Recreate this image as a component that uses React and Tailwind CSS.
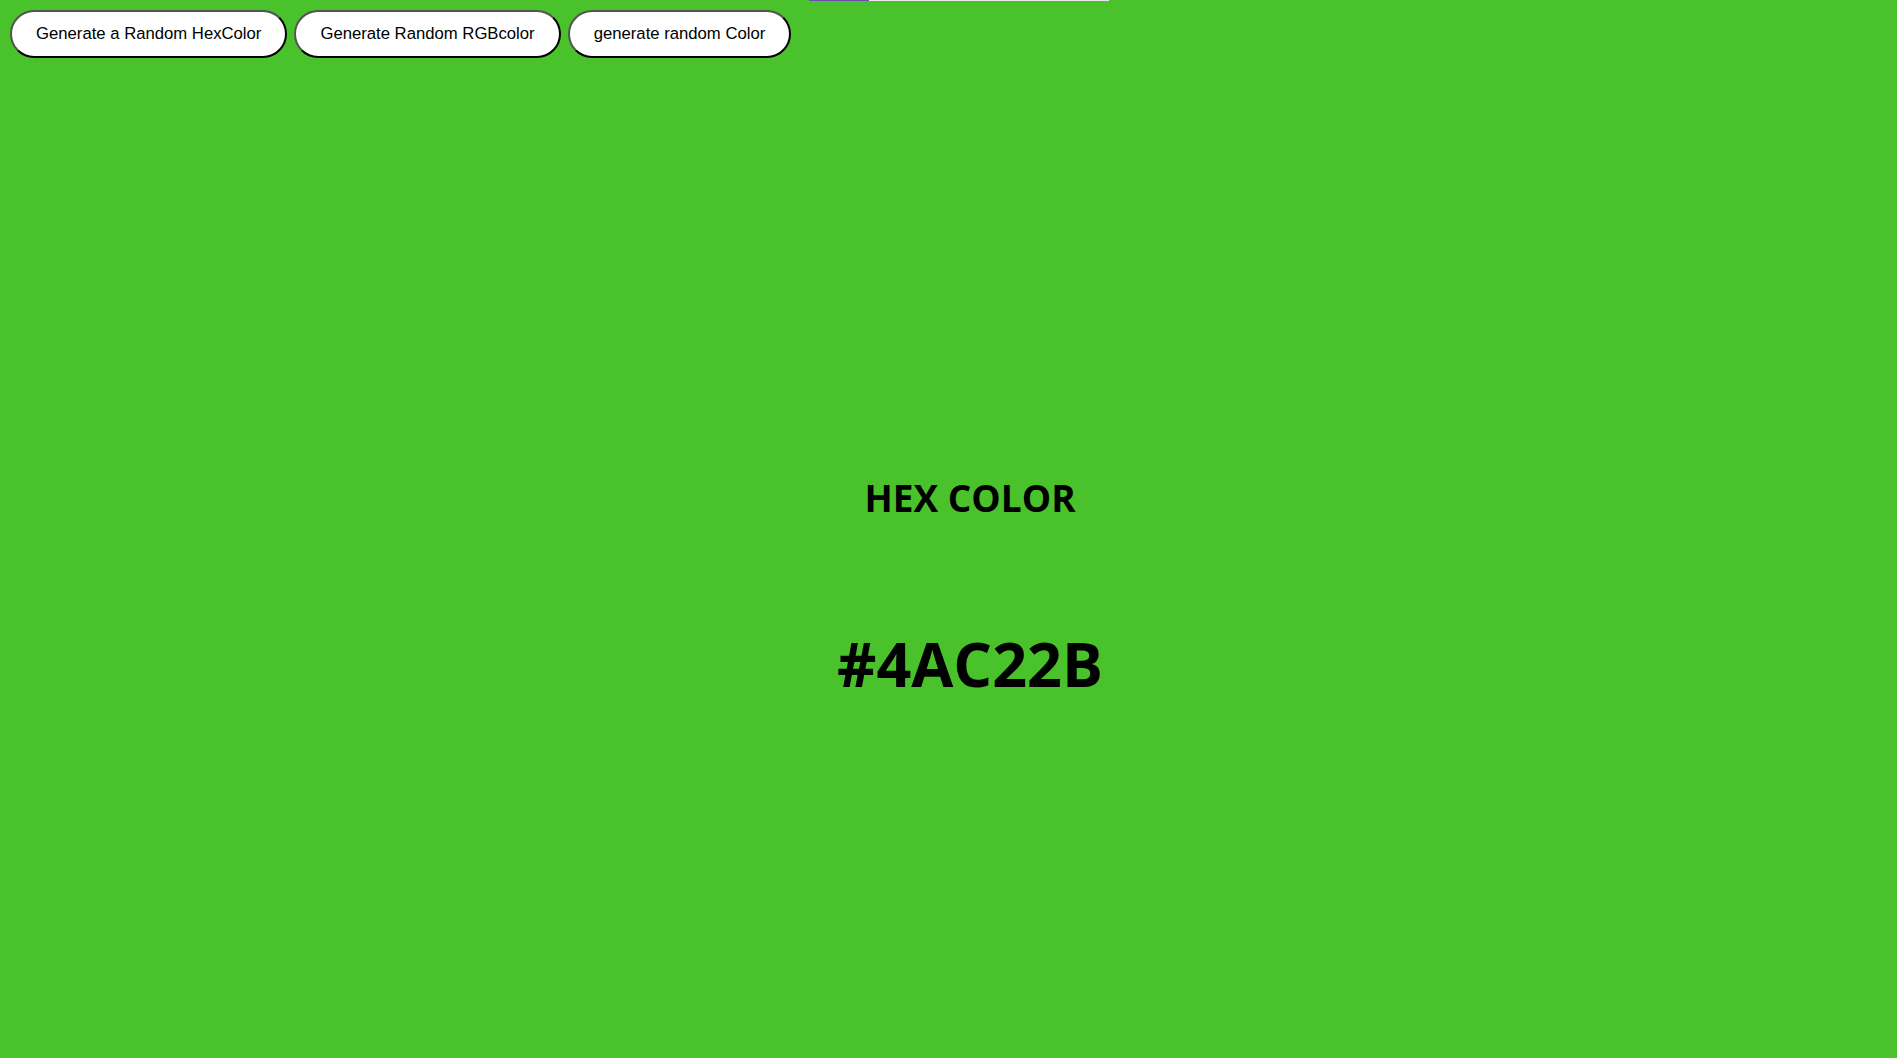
import { useState } from "react";

const buttons = ["Generate a Random HexColor", "Generate Random RGBcolor", "generate random Color"];

const App = () => {
    const [color] = useState("#4AC22B");

    return (
        <div className="relative min-h-[1058px] bg-[#4ac22b] font-['Liberation_Sans',Arial,sans-serif]">
            {/* thin progress strip at the very top */}
            <div className="absolute left-[809px] top-0 flex h-px w-[300px]">
                <div className="w-[60px] bg-[#6a4fb0]" />
                <div className="flex-1 bg-[#e8e8e8]" />
            </div>

            <div className="flex gap-[7px] px-[10px] pt-[10px]">
                {buttons.map((label) => (
                    <button
                        key={label}
                        className="h-[48px] rounded-[24px] border-2 [border-style:outset] border-black bg-white px-[24px] text-[16.7px] text-black"
                    >
                        {label}
                    </button>
                ))}
            </div>

            {/* Color readout */}
            <div className="flex flex-col items-center pl-[43px] pt-[421px] font-['Open_Sans',sans-serif] font-bold text-black">
                <h1 className="text-[37px] leading-none">HEX COLOR</h1>
                <h2 className="mt-[117px] text-[61px] leading-none">{color}</h2>
            </div>
        </div>
    );
};

export default App;
